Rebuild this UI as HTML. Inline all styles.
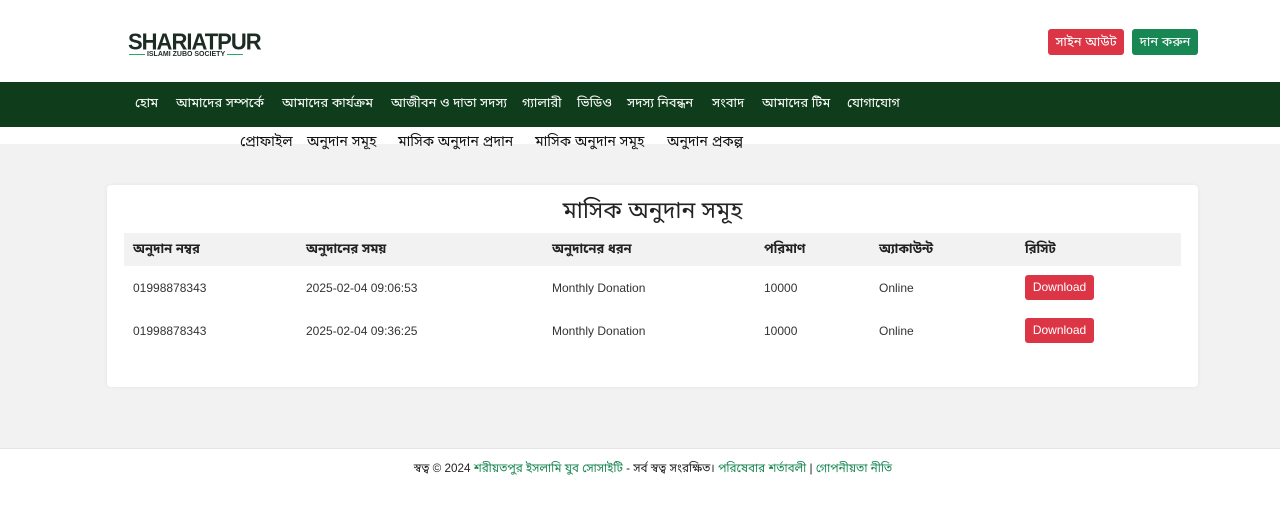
<!DOCTYPE html>
<html><head><meta charset="utf-8"><style>
*{margin:0;padding:0;box-sizing:border-box}
body{width:1280px;height:513px;position:relative;background:#fff;font-family:"Liberation Sans","Noto Sans Bengali","Noto Sans CJK SC",sans-serif;overflow:hidden;color:#212529}
.a{position:absolute;white-space:nowrap}
.nav{position:absolute;left:0;top:82px;width:1280px;height:45px;background:#0f3d1c}
.nav span{position:absolute;top:13px;color:#fff;font-size:13px;white-space:nowrap}
.gray{position:absolute;left:0;top:144px;width:1280px;height:304px;background:#f2f2f2}
.sub span{position:absolute;top:133px;font-size:14px;color:#111;white-space:nowrap}
.card{position:absolute;left:107px;top:185px;width:1091px;height:202px;background:#fff;border-radius:4px;box-shadow:0 0 4px rgba(0,0,0,.06)}
.th{position:absolute;left:124px;top:233px;width:1057px;height:33px;background:#f2f2f2}
.h{position:absolute;top:241px;font-size:13px;font-weight:bold;color:#222;white-space:nowrap}
.c{position:absolute;font-size:12px;color:#333;white-space:nowrap}
.btn{position:absolute;left:1025px;width:69px;height:25px;background:#dc3545;color:#fff;font-size:12px;border-radius:3px;text-align:center;line-height:25px}
</style></head><body>
<div class="a" style="left:128px;top:30px;font-size:22px;font-weight:bold;color:#1c2b24;letter-spacing:-1px;line-height:24px;transform:scaleY(1.05)">SHARIATPUR</div>
<div class="a" style="left:129px;top:50px;font-size:7px;font-weight:bold;color:#1c2b24;line-height:9px"><span style="display:inline-block;width:16px;border-top:1px solid #2a6;vertical-align:middle"></span> ISLAMI ZUBO SOCIETY <span style="display:inline-block;width:16px;border-top:1px solid #2a6;vertical-align:middle"></span></div>
<div class="a" style="left:1048px;top:29px;width:76px;height:26px;background:#dc3545;border-radius:3px;color:#fff;font-size:13px;text-align:center;line-height:25px">সাইন আউট</div>
<div class="a" style="left:1132px;top:29px;width:66px;height:26px;background:#198754;border-radius:3px;color:#fff;font-size:13px;text-align:center;line-height:25px">দান করুন</div>
<div class="nav">
<span style="left:135px">হোম</span><span style="left:176px">আমাদের সম্পর্কে</span><span style="left:282px">আমাদের কার্যক্রম</span><span style="left:391px">আজীবন ও দাতা সদস্য</span><span style="left:522px">গ্যালারী</span><span style="left:577px">ভিডিও</span><span style="left:627px">সদস্য নিবন্ধন</span><span style="left:712px">সংবাদ</span><span style="left:762px">আমাদের টিম</span><span style="left:847px">যোগাযোগ</span>
</div>
<div class="gray"></div>
<div class="sub"><span style="left:240px">প্রোফাইল</span><span style="left:307px">অনুদান সমূহ</span><span style="left:398px">মাসিক অনুদান প্রদান</span><span style="left:535px">মাসিক অনুদান সমূহ</span><span style="left:667px">অনুদান প্রকল্প</span></div>
<div class="card"></div>
<div class="a" style="left:107px;width:1091px;top:197px;text-align:center;font-size:23px;color:#222">মাসিক অনুদান সমূহ</div>
<div class="th"></div>
<div class="h" style="left:133px">অনুদান নম্বর</div><div class="h" style="left:306px">অনুদানের সময়</div><div class="h" style="left:552px">অনুদানের ধরন</div><div class="h" style="left:764px">পরিমাণ</div><div class="h" style="left:879px">অ্যাকাউন্ট</div><div class="h" style="left:1025px">রিসিট</div>
<div class="c" style="left:133px;top:281px">01998878343</div><div class="c" style="left:306px;top:281px">2025-02-04 09:06:53</div><div class="c" style="left:552px;top:281px">Monthly Donation</div><div class="c" style="left:764px;top:281px">10000</div><div class="c" style="left:879px;top:281px">Online</div>
<div class="btn" style="top:275px">Download</div>
<div class="c" style="left:133px;top:324px">01998878343</div><div class="c" style="left:306px;top:324px">2025-02-04 09:36:25</div><div class="c" style="left:552px;top:324px">Monthly Donation</div><div class="c" style="left:764px;top:324px">10000</div><div class="c" style="left:879px;top:324px">Online</div>
<div class="btn" style="top:318px">Download</div>
<div class="a" style="left:0;width:1280px;top:448px;border-top:1px solid #e5e5e5"></div>
<div class="a" style="left:13px;width:1280px;top:461px;text-align:center;font-size:11.7px;color:#222">স্বত্ব © 2024 <span style="color:#198754">শরীয়তপুর ইসলামি যুব সোসাইটি</span> - সর্ব স্বত্ব সংরক্ষিত। <span style="color:#198754">পরিষেবার শর্তাবলী</span> | <span style="color:#198754">গোপনীয়তা নীতি</span></div>
</body></html>
